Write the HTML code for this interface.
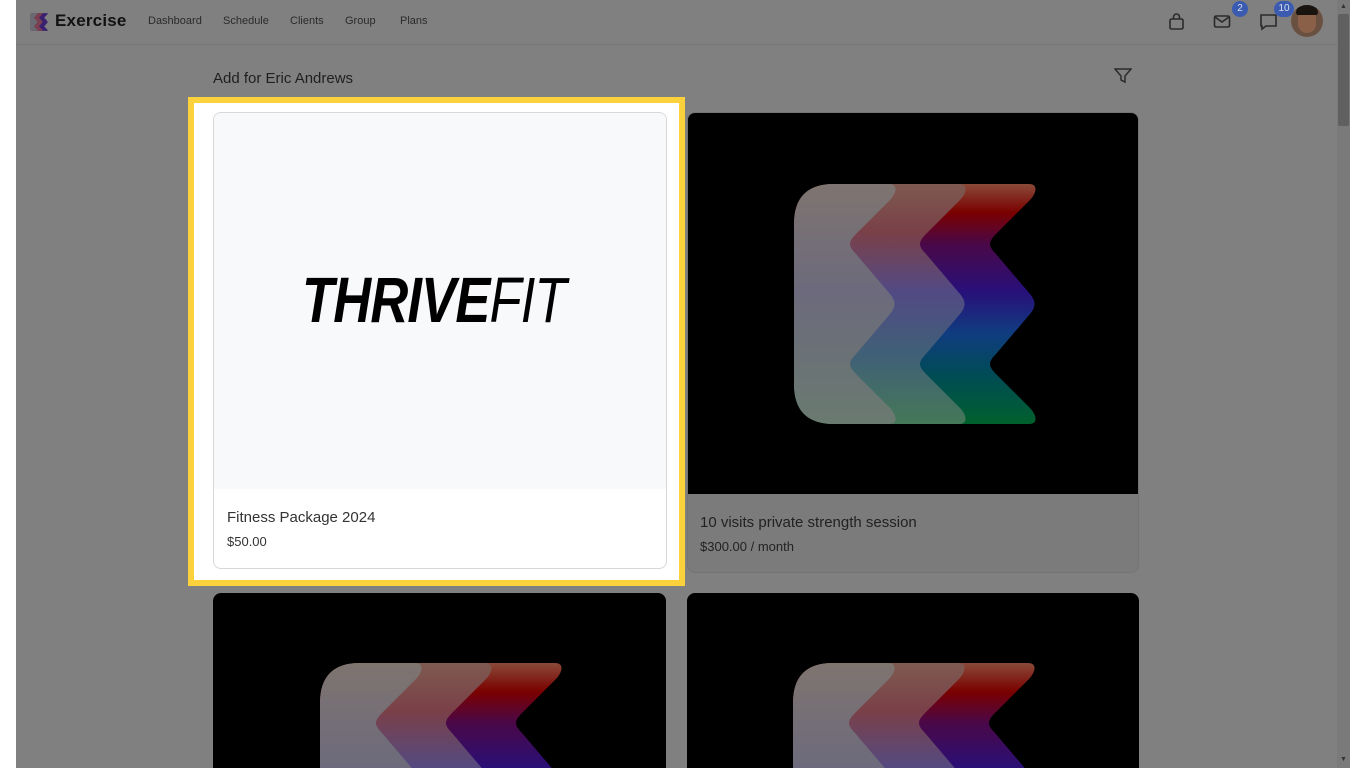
<!DOCTYPE html>
<html style="overflow:hidden"><head><meta charset="utf-8"><style>
*{margin:0;padding:0;box-sizing:border-box}
html,body{width:1366px;height:768px;overflow:hidden}
body{background:#fff;font-family:"Liberation Sans",sans-serif;position:relative}
.page{position:absolute;left:16px;top:0;width:1321px;height:768px;background:#808080}
.nav{position:absolute;left:16px;top:0;width:1321px;height:45px;border-bottom:1px solid #767676;background:#808080}
.abs{position:absolute}
.navlink{position:absolute;top:15px;font-size:11px;color:#2a2a2a}
.sb{position:absolute;left:1337px;top:0;width:13px;height:768px;background:#7a7a7a}
.card{position:absolute;border-radius:8px;overflow:hidden}
.badge{position:absolute;background:#3b5bb0;color:#d8def0;font-size:10px;border-radius:9px;height:16px;text-align:center;line-height:16px}
</style></head><body>
<svg width="0" height="0" style="position:absolute">
 <defs>
  <linearGradient id="g3" x1="0" y1="0" x2="0" y2="1"><stop offset="0" stop-color="#8a4a38"/><stop offset=".12" stop-color="#7a0000"/><stop offset=".25" stop-color="#4a0848"/><stop offset=".45" stop-color="#28107a"/><stop offset=".62" stop-color="#103c80"/><stop offset=".8" stop-color="#004c55"/><stop offset="1" stop-color="#00602c"/></linearGradient>
  <linearGradient id="g2" x1="0" y1="0" x2="0" y2="1"><stop offset="0" stop-color="#7e5a50"/><stop offset=".2" stop-color="#7a4048"/><stop offset=".45" stop-color="#524a84"/><stop offset=".7" stop-color="#405f78"/><stop offset="1" stop-color="#457858"/></linearGradient>
  <linearGradient id="g1" x1="0" y1="0" x2="0" y2="1"><stop offset="0" stop-color="#7e7470"/><stop offset=".45" stop-color="#6c6a7c"/><stop offset="1" stop-color="#6a7a70"/></linearGradient>
  <path id="w3" d="M40,0H235C245,0 242,10 236,16L202,50C194,58 194,62 202,70L236,110C242,117 242,123 236,130L202,170C194,178 194,182 202,190L236,224C242,230 245,240 235,240H40Q0,240 0,200V40Q0,0 40,0Z"/>
  <path id="w2" d="M40,0H165C175,0 172,10 166,16L132,50C124,58 124,62 132,70L166,110C172,117 172,123 166,130L132,170C124,178 124,182 132,190L166,224C172,230 175,240 165,240H40Q0,240 0,200V40Q0,0 40,0Z"/>
  <path id="w1" d="M40,0H95C105,0 102,10 96,16L62,50C54,58 54,62 62,70L96,110C102,117 102,123 96,130L62,170C54,178 54,182 62,190L96,224C102,230 105,240 95,240H40Q0,240 0,200V40Q0,0 40,0Z"/>
 </defs>
</svg>
<div class="page"></div>
<div class="nav"></div>
<svg class="abs" style="left:30px;top:13px" width="18" height="18" viewBox="0 0 245 240">
<use href="#w3" fill="#3a2070"/><use href="#w2" fill="#7a4050"/><use href="#w1" fill="#6a6a72"/>
</svg>
<div class="abs" style="left:55px;top:11px;font-size:17px;color:#111;font-weight:bold;letter-spacing:.2px">Exercise</div>
<div class="navlink" style="left:148px">Dashboard</div>
<div class="navlink" style="left:223px">Schedule</div>
<div class="navlink" style="left:290px">Clients</div>
<div class="navlink" style="left:345px">Group</div>
<div class="navlink" style="left:400px">Plans</div>
<svg class="abs" style="left:1168px;top:13px" width="18" height="18" viewBox="0 0 18 18" fill="none" stroke="#2a2a2a" stroke-width="1.6"><rect x="2" y="6" width="13" height="10" rx="1.5"/><path d="M5.5 6V4a3 3 0 0 1 6 0v2"/></svg>
<svg class="abs" style="left:1213px;top:14px" width="19" height="16" viewBox="0 0 19 16" fill="none" stroke="#2a2a2a" stroke-width="1.6"><rect x="1.5" y="2" width="15" height="11" rx="1.5"/><path d="M2 3l7 5 7-5"/></svg>
<svg class="abs" style="left:1259px;top:13px" width="19" height="19" viewBox="0 0 19 19" fill="none" stroke="#2a2a2a" stroke-width="1.6"><path d="M2 2h15v11H7l-4 3v-3H2z"/></svg>
<div class="badge" style="left:1232px;top:1px;width:16px">2</div>
<div class="badge" style="left:1274px;top:1px;width:20px">10</div>
<div class="abs" style="left:1291px;top:5px;width:32px;height:32px;border-radius:50%;background:#6a5040;overflow:hidden"><div style="position:absolute;left:7px;top:4px;width:18px;height:24px;border-radius:9px;background:#8a6048"></div><div style="position:absolute;left:5px;top:0;width:22px;height:10px;border-radius:10px 10px 3px 3px;background:#1a1410"></div></div>
<div class="sb"></div>
<div class="abs" style="left:1340px;top:3px;font-size:7px;color:#333">▲</div>
<div class="abs" style="left:1338px;top:14px;width:11px;height:112px;background:#606060;border-radius:2px"></div>
<div class="abs" style="left:1340px;top:756px;font-size:7px;color:#333">▼</div>

<div class="abs" style="left:213px;top:70px;font-size:15px;color:#1f1f1f">Add for Eric Andrews</div>
<svg class="abs" style="left:1114px;top:68px" width="18" height="16" viewBox="0 0 18 16" fill="none" stroke="#2a2a2a" stroke-width="1.5"><path d="M1 1h16l-6 7v6l-4-2V8z"/></svg>

<div class="abs" style="left:188px;top:97px;width:497px;height:489px;border:6px solid #fcd23c;background:#fff"></div>
<div class="card" style="left:213px;top:112px;width:454px;height:457px;border:1px solid #d8d8d8;background:#fff">
 <div style="height:376px;background:#f8f9fb;position:relative">
  <div style="position:absolute;left:88px;top:152px;font-size:64px;line-height:70px;font-style:italic;color:#000;letter-spacing:-1px;transform:scaleX(.82);transform-origin:0 0;white-space:nowrap"><b>THRIVE</b>FIT</div>
 </div>
 <div style="position:absolute;left:13px;top:396px;font-size:15px;color:#333">Fitness Package 2024</div>
 <div style="position:absolute;left:13px;top:421px;font-size:13px;color:#333">$50.00</div>
</div>

<div class="card" style="left:687px;top:112px;width:452px;height:461px;border:1px solid #747474;background:#7b7b7b">
 <div style="height:381px;background:#000;position:relative">
  <svg style="position:absolute;left:106px;top:71px" width="245" height="240" viewBox="0 0 245 240">
   <use href="#w3" fill="url(#g3)"/><use href="#w2" fill="url(#g2)"/><use href="#w1" fill="url(#g1)"/>
  </svg>
 </div>
 <div style="position:absolute;left:12px;top:401px;font-size:15px;color:#222">10 visits private strength session</div>
 <div style="position:absolute;left:12px;top:426px;font-size:13px;color:#222">$300.00 / month</div>
</div>

<div class="card" style="left:213px;top:593px;width:453px;height:175px;background:#000;border-radius:8px 8px 0 0">
  <svg style="position:absolute;left:107px;top:70px" width="245" height="240" viewBox="0 0 245 240">
   <use href="#w3" fill="url(#g3)"/><use href="#w2" fill="url(#g2)"/><use href="#w1" fill="url(#g1)"/>
  </svg>
</div>
<div class="card" style="left:687px;top:593px;width:452px;height:175px;background:#000;border-radius:8px 8px 0 0">
  <svg style="position:absolute;left:106px;top:70px" width="245" height="240" viewBox="0 0 245 240">
   <use href="#w3" fill="url(#g3)"/><use href="#w2" fill="url(#g2)"/><use href="#w1" fill="url(#g1)"/>
  </svg>
</div>
</body></html>
